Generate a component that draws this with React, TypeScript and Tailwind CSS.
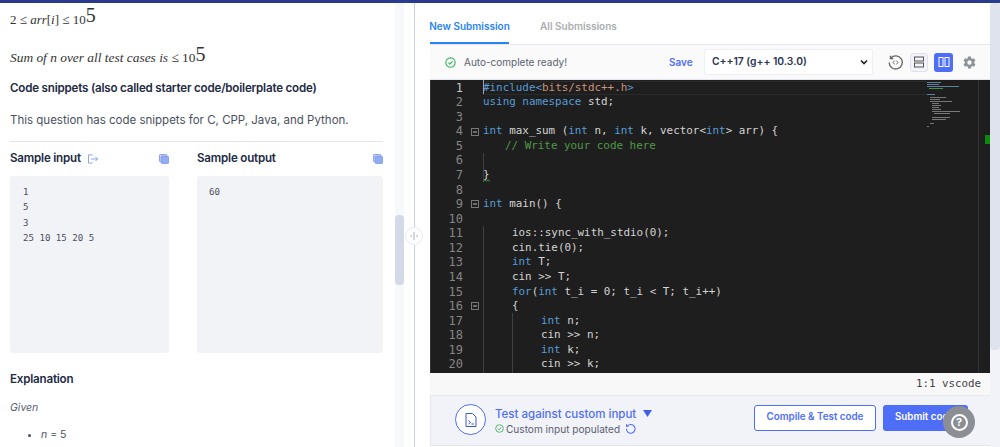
import React from "react";

type Tok = [string, string];

const kw = "text-[#569cd6]";
const tx = "text-[#d4d4d4]";
const cm = "text-[#4f9a45]";
const st = "text-[#ce9178]";

const code: { t: Tok[]; fold?: boolean; ind?: string }[] = [
    { t: [[kw, "#include"], [kw, "<"], [st, "bits/stdc++.h"], [kw, ">"]] },
    { t: [[kw, "using namespace"], [tx, " std;"]] },
    { t: [] },
    { t: [[kw, "int"], [tx, " max_sum ("], [kw, "int"], [tx, " n, "], [kw, "int"], [tx, " k, vector<"], [kw, "int"], [tx, "> arr) {"]], fold: true },
    { t: [[cm, "// Write your code here"]], ind: "pl-[22px]" },
    { t: [] },
    { t: [[tx, "}"]] },
    { t: [] },
    { t: [[kw, "int"], [tx, " main() {"]], fold: true },
    { t: [] },
    { t: [[tx, "ios::sync_with_stdio(0);"]], ind: "pl-[29px]" },
    { t: [[tx, "cin.tie(0);"]], ind: "pl-[29px]" },
    { t: [[kw, "int"], [tx, " T;"]], ind: "pl-[29px]" },
    { t: [[tx, "cin >> T;"]], ind: "pl-[29px]" },
    { t: [[kw, "for"], [tx, "("], [kw, "int"], [tx, " t_i = 0; t_i < T; t_i++)"]], ind: "pl-[29px]" },
    { t: [[tx, "{"]], fold: true, ind: "pl-[29px]" },
    { t: [[kw, "int"], [tx, " n;"]], ind: "pl-[58px]" },
    { t: [[tx, "cin >> n;"]], ind: "pl-[58px]" },
    { t: [[kw, "int"], [tx, " k;"]], ind: "pl-[58px]" },
    { t: [[tx, "cin >> k;"]], ind: "pl-[58px]" },
];

const CopyIcon = () => (
    <svg width="10" height="10" viewBox="0 0 11 11">
        <rect x="0.5" y="0.5" width="8" height="8" rx="1" fill="#c3d0f5" stroke="#7f9bea" />
        <rect x="2.5" y="2.5" width="8" height="8" rx="1" fill="#94adf2" stroke="#7f9bea" />
    </svg>
);

const Check = ({ size }: { size: number }) => (
    <svg width={size} height={size} viewBox="0 0 16 16" fill="none" stroke="#3fb35f" strokeWidth="1.6">
        <circle cx="8" cy="8" r="6.8" />
        <path d="M5 8.3l2.1 2.1L11 6" />
    </svg>
);

const Minimap = () => (
    <svg width="42" height="50" viewBox="0 0 42 50" className="absolute left-[496px] top-[1px]">
        <g fill="#5f7f9f">
            <rect x="0" y="1" width="14" height="1" />
            <rect x="0" y="3" width="12" height="1" />
            <rect x="0" y="5" width="32" height="1" />
            <rect x="2" y="7" width="14" height="1" fill="#4f8a45" />
            <rect x="0" y="13" width="8" height="1" />
        </g>
        <g fill="#777">
            <rect x="3" y="16" width="16" height="1" />
            <rect x="3" y="18" width="10" height="1" />
            <rect x="3" y="20" width="22" height="1" />
            <rect x="5" y="22" width="7" height="1" />
            <rect x="5" y="24" width="9" height="1" />
            <rect x="5" y="26" width="7" height="1" />
            <rect x="5" y="28" width="9" height="1" />
            <rect x="5" y="30" width="28" height="1" />
            <rect x="7" y="32" width="16" height="1" />
            <rect x="5" y="36" width="18" height="1" />
            <rect x="5" y="38" width="14" height="1" />
            <rect x="3" y="42" width="4" height="1" />
            <rect x="0" y="45" width="2" height="1" />
        </g>
    </svg>
);

const Editor = () => (
    <div className="relative h-[293px] bg-[#1e1e1e] overflow-hidden font-['DejaVu_Sans_Mono',monospace] text-[10.9px] leading-[14.58px] border-l border-[#333] pt-[0.5px]">
        {code.map((line, i) => (
            <div key={i} className="flex h-[14.58px]">
                <div className={`w-[32px] text-right text-[12px] ${i === 0 ? "text-[#c6c6c6]" : "text-[#858585]"}`}>{i + 1}</div>
                <div className="w-[20px] flex items-center justify-end pr-[4px]">
                    {line.fold && (
                        <svg width="8" height="8" viewBox="0 0 8 8">
                            <rect x="0.5" y="0.5" width="7" height="7" fill="none" stroke="#777" />
                            <path d="M2 4h4" stroke="#bbb" />
                        </svg>
                    )}
                </div>
                <div className={`whitespace-pre ${line.ind ?? ""} ${i === 0 ? "flex-1 border-y border-[#2a2a2a] leading-[12.6px] mr-[63px]" : ""}`}>
                    {line.t.map(([c, s], j) => (
                        <span key={j} className={c}>{s}</span>
                    ))}
                </div>
            </div>
        ))}
        <div className="absolute left-[52px] top-[73px] h-[29px] w-px bg-[#404040]" />
        <div className="absolute left-[52px] top-[146px] h-[147px] w-px bg-[#404040]" />
        <div className="absolute left-[81px] top-[233px] h-[60px] w-px bg-[#404040]" />
        <div className="absolute left-[52px] top-[0px] h-[14px] w-px bg-[#9aa4b8]" />
        <svg width="7" height="3" viewBox="0 0 7 3" className="absolute left-[52px] top-[99px]" fill="none" stroke="#3c9a45">
            <path d="M0 2.5 2 .8 3.5 2.2 5 .8 7 2.5" />
        </svg>
        <Minimap />
        <div className="absolute right-[11px] top-0 h-full w-px bg-[#333]" />
        <div className="absolute right-0 top-[55px] h-[9px] w-[5px] bg-[#0a8a0a]" />
    </div>
);

export default function App() {
    return (
        <div className="relative flex flex-col w-[1000px] h-[447px] overflow-hidden bg-white font-['Inter',sans-serif]">
            <div className="h-[3px] bg-[#2a3a8c] shrink-0" />
            <div className="flex flex-1 min-h-0">
                {/* problem statement */}
                <div className="w-[395px] shrink-0 pl-[10px] pr-[12px] overflow-hidden text-[#2c3454]">
                    <div className="h-[26px] flex items-end font-['Liberation_Serif',serif] text-[13px] text-[#333]">
                        <span>2 ≤ <i>arr</i>[<i>i</i>] ≤ 10</span>
                        <span className="text-[20px] leading-[22px] mb-[3px]">5</span>
                    </div>
                    <div className="h-[39px] flex items-end font-['Liberation_Serif',serif] text-[13.4px] text-[#333]">
                        <span><i>Sum of n over all test cases is</i> ≤ 10</span>
                        <span className="text-[20px] leading-[22px] mb-[3px]">5</span>
                    </div>
                    <h3 className="mt-[11px] text-[11.6px] tracking-[-0.2px] leading-[18px] font-semibold text-[#222a45]">
                        Code snippets (also called starter code/boilerplate code)
                    </h3>
                    <p className="mt-[14px] text-[11.5px] leading-[18px] text-[#4a4f60]">
                        This question has code snippets for C, CPP, Java, and Python.
                    </p>
                    <div className="mt-[12px] border-t border-[#e3e5ea]" />
                    <div className="mt-[8px] flex gap-[28px]">
                        <div className="w-[159px]">
                            <div className="flex items-center h-[18px] text-[11.6px] tracking-[-0.2px] font-semibold text-[#222a45]">
                                Sample input
                                <svg className="ml-[7px]" width="10" height="10" viewBox="0 0 11 10" fill="none" stroke="#7f9bea">
                                    <path d="M5 .5H.5v9H5M3.5 5h7M8 2.5 10.5 5 8 7.5" />
                                </svg>
                                <span className="ml-auto"><CopyIcon /></span>
                            </div>
                            <pre className="mt-[8px] h-[177px] rounded-[3px] bg-[#f2f3f7] pl-[13px] pt-[9px] font-['DejaVu_Sans_Mono',monospace] text-[9.1px] leading-[15.3px] text-[#4a4f60]">
                                {"1\n5\n3\n25 10 15 20 5"}
                            </pre>
                        </div>
                        <div className="w-[186px]">
                            <div className="flex items-center h-[18px] text-[11.6px] tracking-[-0.2px] font-semibold text-[#222a45]">
                                Sample output
                                <span className="ml-auto"><CopyIcon /></span>
                            </div>
                            <pre className="mt-[8px] h-[177px] rounded-[3px] bg-[#f2f3f7] pl-[12px] pt-[9px] font-['DejaVu_Sans_Mono',monospace] text-[9.1px] leading-[15.3px] text-[#4a4f60]">
                                60
                            </pre>
                        </div>
                    </div>
                    <h3 className="mt-[17px] text-[11.6px] tracking-[-0.2px] leading-[18px] font-semibold text-[#222a45]">Explanation</h3>
                    <p className="mt-[12px] text-[10.5px] leading-[16px] italic text-[#5a5f70]">Given</p>
                    <ul className="mt-[11px] pl-[31px] list-disc text-[10.5px] leading-[16px] text-[#4a4f60]">
                        <li><i>n</i> = 5</li>
                    </ul>
                </div>

                {/* left scrollbar + splitter */}
                <div className="w-[9px] shrink-0 bg-[#f7f8fa] pt-[212px]">
                    <div className="h-[70px] rounded-[4px] bg-[#d3d9e6]" />
                </div>
                <div className="w-[10px] shrink-0" />
                <div className="w-px shrink-0 bg-[#c6d0ea]" />

                {/* editor side */}
                <div className="w-[15px] shrink-0" />
                <div className="flex flex-col w-[560px] shrink-0">
                    <div className="flex h-[41px] items-end gap-[31px] text-[10px] font-semibold whitespace-nowrap">
                        <div className="h-full flex items-end w-[79px] justify-center pb-[8px] border-b-2 border-[#2a85f0] text-[#2a85f0]">
                            New Submission
                        </div>
                        <div className="pb-[10px] text-[#a9adb0]">All Submissions</div>
                    </div>
                    <div className="flex items-center h-[36px] shrink-0 bg-[#fafafa] border-y border-[#e4e6ec] text-[10px] text-[#5b6170]">
                        <span className="ml-[15px]"><Check size={11} /></span>
                        <span className="ml-[8px] w-[102px] whitespace-nowrap">Auto-complete ready!</span>
                        <span className="ml-[103px] w-[24px] font-semibold text-[#4f6ef7]">Save</span>
                        <div className="ml-[11px] flex h-[26px] w-[169px] items-center justify-between rounded-[2px] bg-white border border-[#eeeff3] pl-[7px] pr-[3px] text-[10.3px] font-semibold text-[#2c3454]">
                            C++17 (g++ 10.3.0)
                            <svg width="10" height="10" viewBox="0 0 10 10" fill="none" stroke="#222" strokeWidth="1.6">
                                <path d="M2 3.5 5 6.5 8 3.5" />
                            </svg>
                        </div>
                        <svg className="ml-[15px]" width="15" height="15" viewBox="0 0 16 16" fill="none" stroke="#666" strokeWidth="1.4">
                            <path d="M3 3.2A7 7 0 1 1 1.2 8" />
                            <path d="M2.6 .8v3h3" />
                            <path d="M7 6 5.4 8 7 10M9 6l1.6 2L9 10" strokeWidth="1" />
                        </svg>
                        <div className="ml-[7px] flex h-[19px] w-[18px] items-center justify-center rounded-[3px] bg-[#f2f3f8] border border-[#dfe2ec]">
                            <svg width="10" height="12" viewBox="0 0 10 12" fill="none" stroke="#555">
                                <rect x=".5" y="1" width="9" height="4" />
                                <rect x=".5" y="7" width="9" height="4" />
                            </svg>
                        </div>
                        <div className="ml-[6px] flex h-[19px] w-[19px] items-center justify-center rounded-[3px] bg-[#4f6ef7]">
                            <svg width="12" height="10" viewBox="0 0 12 10" fill="none" stroke="#fff">
                                <rect x="1" y=".5" width="4" height="9" />
                                <rect x="7" y=".5" width="4" height="9" />
                            </svg>
                        </div>
                        <svg className="ml-[9px]" width="15" height="15" viewBox="0 0 24 24" fill="#8c9198">
                            <path d="M19.14 12.94a7.5 7.5 0 0 0 0-1.88l2.03-1.58a.5.5 0 0 0 .12-.64l-1.92-3.32a.5.5 0 0 0-.61-.22l-2.39.96a7 7 0 0 0-1.62-.94l-.36-2.54a.5.5 0 0 0-.49-.42h-3.84a.5.5 0 0 0-.49.42l-.36 2.54a7 7 0 0 0-1.62.94l-2.39-.96a.5.5 0 0 0-.61.22L2.71 8.84a.5.5 0 0 0 .12.64l2.03 1.58a7.5 7.5 0 0 0 0 1.88l-2.03 1.58a.5.5 0 0 0-.12.64l1.92 3.32c.13.22.39.3.61.22l2.39-.96c.5.38 1.04.7 1.62.94l.36 2.54c.05.24.25.42.49.42h3.84c.24 0 .44-.18.49-.42l.36-2.54a7 7 0 0 0 1.62-.94l2.39.96c.22.08.48 0 .61-.22l1.92-3.32a.5.5 0 0 0-.12-.64zM12 15.5a3.5 3.5 0 1 1 0-7 3.5 3.5 0 0 1 0 7z" />
                        </svg>
                    </div>
                    <Editor />
                    <div className="h-[23px] shrink-0 flex items-center justify-end pr-[9px] bg-[#f8f8f9] border-b border-[#e8e9ee] font-['DejaVu_Sans_Mono',monospace] text-[10.8px] text-[#444]">
                        1:1 vscode
                    </div>
                    <div className="flex items-center h-[50px] shrink-0 bg-[#f2f3f8] border-b border-l border-[#e4e6ec]">
                        <div className="ml-[24px] mb-[2px] flex h-[31px] w-[31px] items-center justify-center rounded-full bg-white border border-[#4f6ef7]">
                            <svg width="12" height="14" viewBox="0 0 12 14" fill="none" stroke="#3a56d4">
                                <path d="M1 .5h6.5L11 4v9.5H1z" />
                                <path d="M3.5 7.5 5.5 9.5 3.5 11M6.5 11H9" strokeWidth="1" />
                            </svg>
                        </div>
                        <div className="ml-[9px]">
                            <div className="flex items-center text-[11.5px] leading-[16px] font-medium text-[#4f6ef7]">
                                Test against custom input
                                <svg className="ml-[7px]" width="9" height="7" viewBox="0 0 9 7" fill="#3f5fe8">
                                    <path d="M0 0h9L4.5 7z" />
                                </svg>
                            </div>
                            <div className="flex items-center text-[10.1px] leading-[14px] text-[#5b6170]">
                                <Check size={9} />
                                <span className="ml-[2px]">Custom input populated</span>
                                <svg className="ml-[5px]" width="11" height="11" viewBox="0 0 16 16" fill="none" stroke="#4f6ef7" strokeWidth="1.5">
                                    <path d="M3.4 4.5A6.3 6.3 0 1 1 2 8.5" />
                                    <path d="M2.2 1.8v3h3" />
                                </svg>
                            </div>
                        </div>
                        <button className="ml-auto mb-[6px] h-[26px] w-[122px] rounded-[3px] bg-white border border-[#4f6ef7] text-[9.8px] font-semibold text-[#4f6ef7]">
                            Compile &amp; Test code
                        </button>
                        <button className="ml-[7px] mb-[6px] mr-[22px] h-[26px] w-[85px] rounded-[3px] bg-[#4f6ef7] text-left pl-[12px] text-[9.8px] font-semibold text-white whitespace-nowrap overflow-hidden">
                            Submit code
                        </button>
                    </div>
                </div>
                <div className="flex-1 bg-[#f1f3f8]">
                    <div className="h-[347px] rounded-[4px] bg-[#dfe3ee]" />
                </div>
            </div>

            {/* splitter handle */}
            <div className="absolute left-[405px] top-[227px] flex h-[18px] w-[18px] items-center justify-center rounded-full bg-white border border-[#e8eaf0] text-[#aab0bc]">
                <svg width="10" height="10" viewBox="0 0 10 10" fill="none" stroke="#a8aeb9">
                    <path d="M5 1v8M1 5h2M7 5h2" />
                </svg>
            </div>

            {/* help */}
            <div className="absolute left-[943px] top-[406px] flex h-[32px] w-[32px] items-center justify-center rounded-full bg-[#8b8e95]">
                <div className="flex h-[17px] w-[17px] items-center justify-center rounded-full border-2 border-white text-[11px] font-bold text-white">?</div>
            </div>
        </div>
    );
}
